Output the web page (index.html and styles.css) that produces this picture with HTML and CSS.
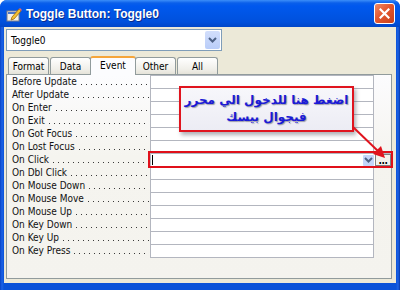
FILE: index.html
```html
<!DOCTYPE html>
<html>
	<head>
		<meta charset="UTF-8">
		<title>Toggle Button: Toggle0</title>
		<link rel="stylesheet" href="styles.css">
	</head>
	<body>
		<div class="window">
			<div class="titlebar">
				<svg class="app-icon" width="16" height="15" viewBox="0 0 16 15">
					<rect x="1" y="4" width="12" height="10" fill="#f4f1e6" stroke="#7c7f8a"/>
					<rect x="2" y="5" width="10" height="2" fill="#4c77c9"/>
					<path d="M6 10 L13 2 L15 4 L8 12 L5 13 Z" fill="#f5c22f" stroke="#9a6a10" stroke-width="0.8"/>
					<path d="M13 2 L15 4 L16 3 L14 1 Z" fill="#e86c6c"/>
				</svg>
				<span class="title">Toggle Button: Toggle0</span>
				<a href="#" class="close">
					<svg width="11" height="11" viewBox="0 0 11 11">
						<path d="M1.5 1.5 L9.5 9.5 M9.5 1.5 L1.5 9.5" stroke="#fff" stroke-width="2.2" stroke-linecap="square"/>
					</svg>
				</a>
			</div>
			<div class="body">
				<div class="combo">
					<span class="combo-text">Toggle0</span>
					<span class="drop">
						<svg width="9" height="6" viewBox="0 0 9 6"><path d="M1 1 L4.5 4.5 L8 1" fill="none" stroke="#4d6185" stroke-width="2"/></svg>
					</span>
				</div>
				<ul class="tabs">
					<li class="tab">Format</li>
					<li class="tab">Data</li>
					<li class="tab active">Event</li>
					<li class="tab">Other</li>
					<li class="tab">All</li>
				</ul>
				<div class="panel">
					<div class="grid">
						<div class="row"><div class="label">Before Update<span class="dots"></span></div><div class="value"></div></div>
						<div class="row"><div class="label">After Update<span class="dots"></span></div><div class="value"></div></div>
						<div class="row"><div class="label">On Enter<span class="dots"></span></div><div class="value"></div></div>
						<div class="row"><div class="label">On Exit<span class="dots"></span></div><div class="value"></div></div>
						<div class="row"><div class="label">On Got Focus<span class="dots"></span></div><div class="value"></div></div>
						<div class="row"><div class="label">On Lost Focus<span class="dots"></span></div><div class="value"></div></div>
						<div class="row"><div class="label">On Click<span class="dots"></span></div>
							<div class="value current">
								<span class="caret"></span>
								<span class="cell-drop">
									<svg width="9" height="6" viewBox="0 0 9 6"><path d="M1 1 L4.5 4.5 L8 1" fill="none" stroke="#4d6185" stroke-width="2"/></svg>
								</span>
								<span class="build">...</span>
							</div>
						</div>
						<div class="row"><div class="label">On Dbl Click<span class="dots"></span></div><div class="value"></div></div>
						<div class="row"><div class="label">On Mouse Down<span class="dots"></span></div><div class="value"></div></div>
						<div class="row"><div class="label">On Mouse Move<span class="dots"></span></div><div class="value"></div></div>
						<div class="row"><div class="label">On Mouse Up<span class="dots"></span></div><div class="value"></div></div>
						<div class="row"><div class="label">On Key Down<span class="dots"></span></div><div class="value"></div></div>
						<div class="row"><div class="label">On Key Up<span class="dots"></span></div><div class="value"></div></div>
						<div class="row"><div class="label">On Key Press<span class="dots"></span></div><div class="value"></div></div>
					</div>
					<!-- callout drawn over the grid -->
					<div class="note" dir="rtl">
						<p>اضغط هنا للدخول الي محرر</p>
						<p>فيجوال بيسك</p>
					</div>
					<svg class="arrow" width="386" height="120" viewBox="0 0 386 120">
						<line x1="346" y1="52" x2="372" y2="77" stroke="#e0141e" stroke-width="2"/>
						<path d="M378 83 L366 79 L374 71 Z" fill="#e0141e"/>
					</svg>
				</div>
			</div>
		</div>
	</body>
</html>
```

FILE: styles.css
```css
* {
	margin:0;
	padding:0;
	box-sizing:border-box;
}
html, body {
	width:400px;
	height:290px;
	background:#fff;
	overflow:hidden;
}
li {
	list-style:none;
}
a {
	text-decoration:none;
}
.window {
	width:400px;
	height:290px;
	display:flex;
	flex-direction:column;
	background:linear-gradient(90deg, #0842c4 0, #1c63e6 2px, #0a52d8 4px, #0a52d8 396px, #1c63e6 398px, #0637a8 400px);
	border-radius:7px 7px 0 0;
	font-family:"DejaVu Sans Condensed", "DejaVu Sans", "Liberation Sans", sans-serif;
	font-stretch:condensed;
	font-size:10px;
	color:#000;
}
	.titlebar {
		height:27px;
		display:flex;
		align-items:center;
		padding:0 5px 0 6px;
		border-radius:7px 7px 0 0;
		background:linear-gradient(#3c8ef9 0, #0a5fea 3px, #0058ee 6px, #0055e5 14px, #0050dc 22px, #0046c8 27px);
	}
		.app-icon {
			margin-top:1px;
		}
		.title {
			margin-left:4px;
			flex:1;
			color:#fff;
			font-family:"Liberation Sans", Arial, sans-serif;
			font-stretch:normal;
			font-weight:bold;
			font-size:12px;
			text-shadow:1px 1px 0 #0a2b8c;
		}
		.close {
			width:21px;
			height:21px;
			display:flex;
			align-items:center;
			justify-content:center;
			border:1px solid #fff;
			border-radius:3px;
			background:linear-gradient(135deg, #f08a64 0, #e3572f 45%, #c63f1a 100%);
		}
	.body {
		flex:1;
		margin:0 4px 7px 4px;
		padding:2px 0 4px 2px;
		background:#ece9d8;
		display:flex;
		flex-direction:column;
	}
		.combo {
			width:216px;
			height:22px;
			display:flex;
			align-items:center;
			background:#fff;
			border:1px solid #7f9db9;
			padding:1px;
		}
			.combo-text {
				flex:1;
				padding-left:3px;
			}
			.drop {
				width:15px;
				height:18px;
				display:flex;
				align-items:center;
				justify-content:center;
				background:linear-gradient(#d2defb, #b9cdf9);
				border-radius:2px;
			}
		.tabs {
			display:flex;
			align-items:flex-end;
			height:23px;
			padding-left:2px;
		}
			.tab {
				width:41px;
				height:17px;
				margin-right:1px;
				display:flex;
				align-items:center;
				justify-content:center;
				border:1px solid #919b9c;
				border-bottom:none;
				border-radius:3px 3px 0 0;
				background:linear-gradient(#fff, #f0efe9 70%, #e5e3d9);
			}
			.tab.active {
				width:46px;
				height:19px;
				margin:0 -1px 0 -2px;
				padding-bottom:2px;
				background:#fcfcfe;
				border-top:2px solid #f5a53a;
				position:relative;
				z-index:1;
				margin-bottom:-1px;
			}
		.panel {
			flex:1;
			width:386px;
			position:relative;
			border:1px solid #919b9c;
			background:linear-gradient(#fcfcfe, #f5f4ef 40%, #f4f3ee);
		}
			.row {
				display:flex;
				height:13px;
			}
				.label {
					width:143px;
					padding:0 1px 0 5px;
					display:flex;
					white-space:nowrap;
					line-height:13px;
					color:#111;
				}
					.dots {
						flex:1;
						margin-left:4px;
						background-image:linear-gradient(90deg, #3a3a3a 1px, transparent 1px);
						background-size:5px 1px;
						background-position:0 9px;
						background-repeat:repeat-x;
					}
				.value {
					width:224px;
					background:#fff;
					border-left:1px solid #b3b6bf;
					border-right:1px solid #b3b6bf;
					border-top:1px solid #b3b6bf;
				}
				.row:last-child .value {
					height:14px;
					border-bottom:1px solid #b3b6bf;
				}
				.value.current {
					width:241px;
					border-right:none;
					display:flex;
					align-items:center;
					outline:2px solid #e0101a;
					position:relative;
					z-index:2;
				}
					.caret {
						width:1px;
						height:10px;
						margin-left:1px;
						background:#000;
					}
					.cell-drop {
						margin-left:auto;
						width:11px;
						height:11px;
						display:flex;
						align-items:center;
						justify-content:center;
						background:#c4d5fa;
						border-radius:1px;
					}
					.build {
						width:16px;
						height:12px;
						margin-left:1px;
						display:flex;
						align-items:flex-end;
						justify-content:center;
						background:#f3f2ec;
						border:1px solid #7f7f7f;
						font-weight:bold;
						line-height:8px;
						letter-spacing:-0.5px;
					}
			.note {
				position:absolute;
				left:172px;
				top:11px;
				width:175px;
				height:46px;
				border:2px solid #e0141e;
				background:linear-gradient(#f7f7fb, #ececf4);
				box-shadow:2px 3px 4px rgba(80,80,90,0.45);
				display:flex;
				flex-direction:column;
				justify-content:center;
				align-items:center;
				font-family:"DejaVu Sans", sans-serif;
				font-stretch:normal;
				font-weight:bold;
				font-size:12px;
				line-height:17px;
				color:#1a1ad6;
				text-shadow:1px 1px 1px #9a9aa8;
				z-index:3;
			}
			.arrow {
				position:absolute;
				left:0;
				top:0;
				z-index:4;
			}
```
